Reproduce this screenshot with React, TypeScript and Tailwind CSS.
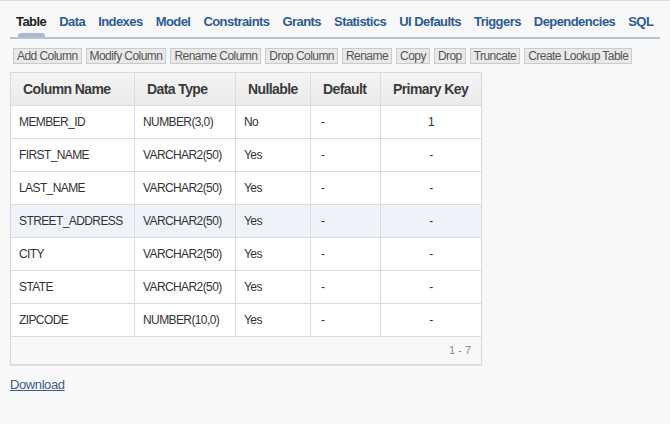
import React from "react";

const tabs = [
  "Table",
  "Data",
  "Indexes",
  "Model",
  "Constraints",
  "Grants",
  "Statistics",
  "UI Defaults",
  "Triggers",
  "Dependencies",
  "SQL",
];

const actions = [
  "Add Column",
  "Modify Column",
  "Rename Column",
  "Drop Column",
  "Rename",
  "Copy",
  "Drop",
  "Truncate",
  "Create Lookup Table",
];

const columns = [
  { name: "MEMBER_ID", type: "NUMBER(3,0)", nullable: "No", pk: "1" },
  { name: "FIRST_NAME", type: "VARCHAR2(50)", nullable: "Yes", pk: "-" },
  { name: "LAST_NAME", type: "VARCHAR2(50)", nullable: "Yes", pk: "-" },
  { name: "STREET_ADDRESS", type: "VARCHAR2(50)", nullable: "Yes", pk: "-" },
  { name: "CITY", type: "VARCHAR2(50)", nullable: "Yes", pk: "-" },
  { name: "STATE", type: "VARCHAR2(50)", nullable: "Yes", pk: "-" },
  { name: "ZIPCODE", type: "NUMBER(10,0)", nullable: "Yes", pk: "-" },
];

const headers = ["Column Name", "Data Type", "Nullable", "Default", "Primary Key"];
const widths = ["w-[124px]", "w-[101px]", "w-[75px]", "w-[70px]", "w-[100px]"];

export default function App() {
  return (
    <div className="min-h-screen border-t border-[#dcdcdc] bg-[#f8f8f8] font-['Liberation_Sans',Arial,sans-serif]">
      {/* Tabs */}
      <div className="mx-[10px] flex h-[38px] gap-[13px] border-b-2 border-[#b3c3d6] pl-[6px] pt-[5px]">
        {tabs.map((t, i) => (
          <div
            key={t}
            className={`relative flex items-center text-[13px] font-bold tracking-[-0.56px] ${
              i === 0 ? "text-[#222]" : "text-[#2c5c94]"
            }`}
          >
            {t}
            {i === 0 && (
              <span className="absolute bottom-0 left-[2px] right-[1px] h-[4px] rounded-t-[3px] bg-[#a9b9cd]" />
            )}
          </div>
        ))}
      </div>

      {/* Actions */}
      <div className="ml-[13px] mt-[9px] flex gap-[4px]">
        {actions.map((a) => (
          <button
            key={a}
            className="flex h-[16px] items-center border border-[#cbcbcb] bg-[#e9e9e9] px-[3px] text-[12px] leading-none tracking-[-0.55px] text-[#555]"
          >
            {a}
          </button>
        ))}
      </div>

      {/* Columns table */}
      <div className="ml-[10px] mt-[8px] w-[472px] border border-[#d9d9d9] bg-white shadow-[0_1px_1px_rgba(0,0,0,0.08)]">
        <table className="table-fixed border-separate border-spacing-0">
          <thead>
            <tr>
              {headers.map((h, i) => (
                <th
                  key={h}
                  className={`${widths[i]} h-[33px] border-b border-[#dcdcdc] bg-gradient-to-b from-[#f4f4f4] to-[#ebebeb] pl-[12px] text-left text-[14px] font-bold tracking-[-0.6px] text-[#3a3a3a] ${
                    i < 4 ? "border-r" : ""
                  }`}
                >
                  {h}
                </th>
              ))}
            </tr>
          </thead>
          <tbody>
            {columns.map((c) => {
              const hl = c.name === "STREET_ADDRESS";
              const cell = `h-[33px] border-b border-[#dcdcdc] px-[8px] text-[12px] tracking-[-0.6px] text-[#333] ${
                hl ? "bg-[#eef3fa]" : ""
              }`;
              return (
                <tr key={c.name}>
                  <td className={`${cell} border-r`}>{c.name}</td>
                  <td className={`${cell} border-r`}>{c.type}</td>
                  <td className={`${cell} border-r`}>{c.nullable}</td>
                  <td className={`${cell} border-r pl-[10px]`}>-</td>
                  <td className={`${cell} text-center`}>{c.pk}</td>
                </tr>
              );
            })}
          </tbody>
        </table>
        <div className="flex h-[27px] items-center justify-end bg-[#f8f8f8] pr-[10px] text-[11px] text-[#888]">
          1 - 7
        </div>
      </div>

      <div className="ml-[10px] mt-[11px] leading-[16px]">
        <a href="#" className="text-[13px] tracking-[-0.4px] text-[#3e5d8c] underline">
          Download
        </a>
      </div>
    </div>
  );
}
